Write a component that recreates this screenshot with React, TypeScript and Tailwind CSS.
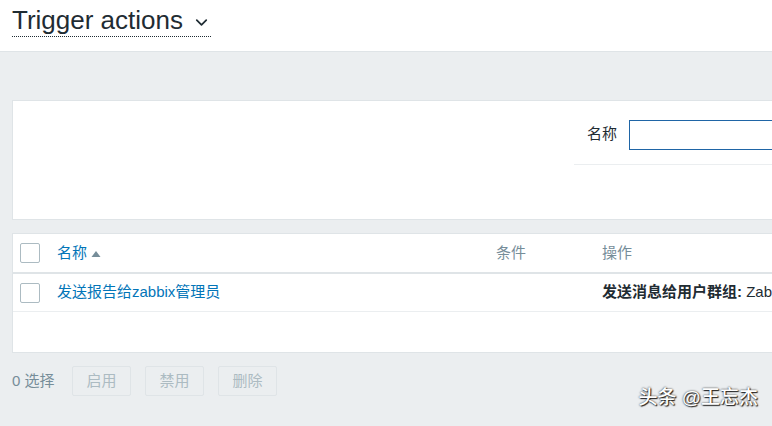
import { ChevronDown } from "lucide-react";

const font = { fontFamily: '"Liberation Sans", Arial, "Noto Sans CJK SC", sans-serif' };

function Checkbox() {
  return <span className="block h-[20px] w-[20px] rounded-[2px] border border-[#acbbc2] bg-white" />;
}

export default function App() {
  return (
    <div className="relative h-[426px] w-[772px] overflow-hidden bg-[#ebeef0] text-[15px] text-[#1f2c33]" style={font}>
      {/* Header */}
      <header className="h-[52px] border-b border-[#dfe4e7] bg-white pl-[12px] pt-[5px]">
        <h1 className="inline-flex items-center gap-[9px] border-b border-dotted border-[#1f2c33] pb-[1px] text-[26px] leading-[30px]">
          Trigger actions
          <ChevronDown size={19} strokeWidth={2.2} className="mt-[4px]" />
        </h1>
      </header>

      <div className="w-[1100px] pl-[12px] pt-[48px]">
        {/* Filter */}
        <section className="flex h-[120px] border border-[#dfe4e7] bg-white">
          <div className="w-[561px]" />
          <div className="flex-1">
            <div className="flex h-[64px] items-center border-b border-[#ebeef0] pl-[13px] pt-[4px]">
              <span className="w-[42px]">名称</span>
              <span className="h-[30px] w-[300px] border border-[#1f65a6] bg-white" />
            </div>
          </div>
        </section>

        {/* Table */}
        <section className="mt-[13px] border border-[#dfe4e7] bg-white">
          <div className="flex h-[40px] items-center border-b-2 border-[#dfe4e7] text-[#768d99]">
            <div className="w-[44px] pl-[7px]"><Checkbox /></div>
            <div className="flex w-[439px] items-center gap-[4px] text-[#0275b8]">
              名称
              <svg width="10" height="8" viewBox="0 0 10 8" className="mt-[2px]"><path d="M5 1 L9.5 7 L0.5 7 Z" fill="#768d99" /></svg>
            </div>
            <div className="w-[106px]">条件</div>
            <div>操作</div>
          </div>
          <div className="flex h-[38px] items-center border-b border-[#ebeef0]">
            <div className="w-[44px] pl-[7px]"><Checkbox /></div>
            <div className="w-[545px] text-[#0275b8]">发送报告给zabbix管理员</div>
            <div className="whitespace-nowrap"><span className="font-bold">发送消息给用户群组:</span> Zab</div>
          </div>
          <div className="h-[40px]" />
        </section>

        {/* Actions */}
        <div className="mt-[13px] flex items-center gap-[14px]">
          <span className="w-[46px] whitespace-nowrap text-[#768d99]">0 选择</span>
          {["启用", "禁用", "删除"].map((t) => (
            <span key={t} className="flex h-[30px] w-[59px] items-center justify-center rounded-[2px] border border-[#dfe4e7] bg-[#ebeef0] text-[#acbbc2]">
              {t}
            </span>
          ))}
        </div>
      </div>

      {/* Watermark */}
      <div className="absolute bottom-[14px] right-[14px] text-[19px] font-medium text-white" style={{ textShadow: "0 0 2px #222, 1px 1px 1px #222" }}>
        头条 @王忘杰
      </div>
    </div>
  );
}
